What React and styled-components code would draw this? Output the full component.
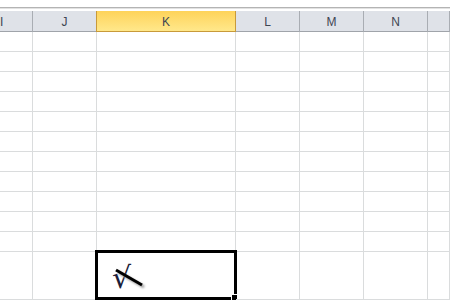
import React from "react";
import styled, { createGlobalStyle } from "styled-components";

const GlobalStyle = createGlobalStyle`
  html, body {
    margin: 0;
    padding: 0;
    background: #ffffff;
    overflow: hidden;
  }
  body {
    font-family: "Liberation Sans", Arial, sans-serif;
  }
`;

const COLS = [
  { key: "I", width: "33px" },
  { key: "J", width: "64px" },
  { key: "K", width: "139px" },
  { key: "L", width: "64px" },
  { key: "M", width: "64px" },
  { key: "N", width: "64px" },
  { key: "O", width: "1fr", label: "" },
];

const ROW_COUNT = 11;

const Sheet = styled.div`
  width: 450px;
  height: 300px;
  overflow: hidden;
  display: flex;
  flex-direction: column;
`;

const TopStrip = styled.div`
  height: 7px;
  border-bottom: 1px solid #b4b4b4;
  box-shadow: 0 1px 0 #e2e2e2;
  margin-bottom: 3px;
  flex: none;
`;

const Row = styled.div`
  display: grid;
  grid-template-columns: ${COLS.map((c) => c.width).join(" ")};
  height: ${(p) => p.$height}px;
  flex: none;
`;

const HeaderCell = styled.div`
  box-sizing: border-box;
  border-right: 1px solid #a9adb3;
  border-bottom: 1px solid #a0a4aa;
  background: ${(p) =>
    p.$active
      ? "linear-gradient(#fed35a, #ffe88b)"
      : "#dfe2e8"};
  ${(p) =>
    p.$active &&
    `
    border-right-color: #c89a3a;
    border-bottom-color: #c89a3a;
    box-shadow: -1px 0 0 #c89a3a;
  `}
  display: flex;
  align-items: center;
  justify-content: ${(p) => (p.$clip ? "flex-start" : "center")};
  font-size: 12px;
  color: #3e4652;
  overflow: hidden;
  padding-top: 1px;
`;

const Cell = styled.div`
  box-sizing: border-box;
  border-right: 1px solid #dadcdd;
  border-bottom: 1px solid #dadcdd;
  position: relative;
`;

const Selection = styled.div`
  position: absolute;
  top: -2px;
  left: -2px;
  right: -2px;
  bottom: -1px;
  border: 3px solid #000;
  box-sizing: border-box;
  pointer-events: none;
`;

const FillHandle = styled.div`
  position: absolute;
  right: -3px;
  bottom: -2px;
  width: 5px;
  height: 5px;
  background: #000;
  border: 1px solid #fff;
`;

const Check = styled.span`
  position: absolute;
  left: 15px;
  top: 11px;
  font-family: "DejaVu Sans", sans-serif;
  font-size: 30px;
  line-height: 1;
  color: #1b1d3a;
`;

const Strike = styled.svg`
  position: absolute;
  left: 19px;
  top: 16px;
  overflow: visible;
`;

function CheckMark() {
  return (
    <>
      <Check>√</Check>
      <Strike width="30" height="20" viewBox="0 0 30 20">
        <defs>
          <filter id="sh" x="-30%" y="-60%" width="160%" height="220%">
            <feGaussianBlur stdDeviation="1" />
          </filter>
        </defs>
        <line x1="2" y1="4" x2="28" y2="19" stroke="#999" strokeWidth="3" filter="url(#sh)" />
        <line x1="0" y1="2" x2="26" y2="17" stroke="#000" strokeWidth="3" />
      </Strike>
    </>
  );
}

export default function App() {
  const rows = Array.from({ length: ROW_COUNT }, (_, i) => i);
  return (
    <>
      <GlobalStyle />
      <Sheet>
        <TopStrip />
        <Row $height={21}>
          {COLS.map((c) => (
            <HeaderCell key={c.key} $active={c.key === "K"} $clip={c.key === "I"}>
              {c.label === undefined ? c.key : c.label}
            </HeaderCell>
          ))}
        </Row>
        {rows.map((r) => (
          <Row key={r} $height={20}>
            {COLS.map((c) => (
              <Cell key={c.key} />
            ))}
          </Row>
        ))}
        <Row $height={48}>
          {COLS.map((c) => (
            <Cell key={c.key}>
              {c.key === "K" && (
                <>
                  <CheckMark />
                  <Selection />
                  <FillHandle />
                </>
              )}
            </Cell>
          ))}
        </Row>
      </Sheet>
    </>
  );
}
